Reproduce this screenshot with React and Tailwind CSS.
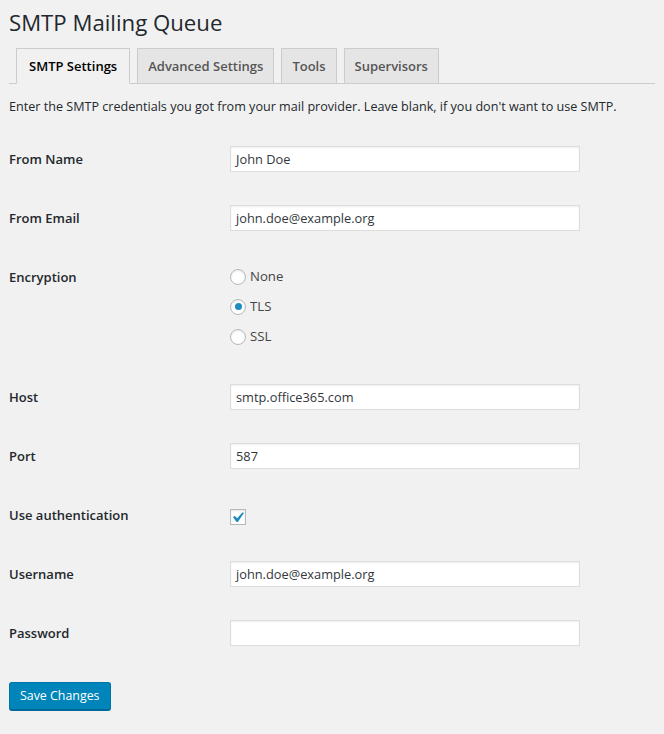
import React from 'react';

// Text input in the WP admin look
const TextInput = ({ value }) => (
  <div className="h-[26px] w-[350px] border border-[#ddd] bg-white px-[5px] text-[12.8px] leading-[24px] text-[#32373c] shadow-[inset_0_1px_2px_rgba(0,0,0,0.07)]">
    {value}
  </div>
);

const Radio = ({ label, checked }) => (
  <div className="flex h-[20px] items-center">
    <span className="mr-[4px] flex h-[16px] w-[16px] items-center justify-center rounded-full border border-[#b4b9be] bg-white shadow-[inset_0_1px_2px_rgba(0,0,0,0.1)]">
      {checked && <span className="h-[7px] w-[7px] rounded-full bg-[#1e8cbe]" />}
    </span>
    <span className="text-[13.2px] text-[#444]">{label}</span>
  </div>
);

const Row = ({ label, children }) => (
  <div className="flex h-[59px] items-center">
    <div className="w-[221px] shrink-0 text-[13px] font-semibold leading-[20px]">{label}</div>
    <div>{children}</div>
  </div>
);

const tabs = ['SMTP Settings', 'Advanced Settings', 'Tools', 'Supervisors'];

const App = () => {
  return (
    <div className="min-h-[734px] bg-[#f1f1f1] px-[9px] font-['Open_Sans',sans-serif] text-[#23282d]">
      {/* Title */}
      <h1 className="pt-[8px] text-[22.2px] leading-[29px] font-normal">SMTP Mailing Queue</h1>

      {/* Tabs */}
      <div className="mt-[11px] flex items-end gap-[7px] border-b border-[#ccc] pl-[7px]">
        {tabs.map((t, i) => (
          <div
            key={t}
            className={
              i === 0
                ? '-mb-px border border-[#ccc] border-b-[#f1f1f1] bg-[#f1f1f1] px-[12px] py-[5px] text-[13px] leading-[24px] font-semibold text-black'
                : '-mb-px border border-[#ccc] bg-[#e5e5e5] px-[10px] py-[5px] text-[13px] leading-[24px] font-semibold text-[#555]'
            }
          >
            {t}
          </div>
        ))}
      </div>

      <p className="mt-[13px] text-[12.6px] leading-[19.5px]">
        Enter the SMTP credentials you got from your mail provider. Leave blank, if you don't want to use SMTP.
      </p>

      {/* Form */}
      <div className="mt-[13px]">
        <Row label="From Name"><TextInput value="John Doe" /></Row>
        <Row label="From Email"><TextInput value="john.doe@example.org" /></Row>

        <div className="flex h-[120px] items-start pt-[19px]">
          <div className="w-[221px] shrink-0 text-[13px] font-semibold leading-[20px]">Encryption</div>
          <div className="flex flex-col gap-[10px]">
            <Radio label="None" />
            <Radio label="TLS" checked />
            <Radio label="SSL" />
          </div>
        </div>

        <Row label="Host"><TextInput value="smtp.office365.com" /></Row>
        <Row label="Port"><TextInput value="587" /></Row>
        <Row label="Use authentication">
          <span className="mt-[4px] flex h-[16px] w-[16px] items-center justify-center border border-[#b4b9be] bg-white shadow-[inset_0_1px_2px_rgba(0,0,0,0.1)]">
            <svg width="21" height="21" viewBox="0 0 20 20" className="shrink-0 -translate-x-[1px]">
              <path d="M14.83 4.89l1.34.94-5.81 8.38H9.02L5.78 9.67l1.34-1.25 2.57 2.4z" fill="#1e8cbe" />
            </svg>
          </span>
        </Row>
        <Row label="Username"><TextInput value="john.doe@example.org" /></Row>
        <Row label="Password"><TextInput value="" /></Row>
      </div>

      <button className="mt-[19px] h-[28px] rounded-[3px] border border-[#0073aa] border-b-[#006799] bg-[#0085ba] px-[10px] text-[12.4px] leading-[26px] text-white shadow-[0_1px_0_#006799]">
        Save Changes
      </button>
    </div>
  );
};

export default App;
